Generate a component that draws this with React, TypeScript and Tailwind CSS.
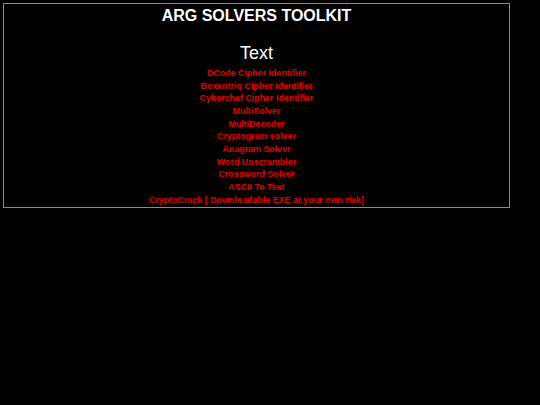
import React from 'react';

const links = [
  'DCode Cipher Identifier',
  'Boxentriq Cipher Identifier',
  'Cyberchef Cipher Identifier',
  'MultiSolver',
  'MultiDecoder',
  'Cryptogram solver',
  'Anagram Solver',
  'Word Unscrambler',
  'Crossword Solver',
  'ASCII To Text',
  'CryptoCrack [ Downloadable EXE at your own risk]',
];

const App: React.FC = () => {
  return (
    <div className="min-h-[405px] bg-black pt-[3px] pl-[3px] font-['Liberation_Sans',Arial,sans-serif]">
      <div className="w-[507px] h-[205px] border border-[#8a8a8a] flex flex-col items-center">
        <h1 className="text-[16px] leading-[23px] font-bold text-white">
          ARG SOLVERS TOOLKIT
        </h1>
        <h2 className="mt-[14px] text-[18px] leading-[24px] text-white">Text</h2>
        <ul className="mt-[2px] flex flex-col items-center">
          {links.map((l) => (
            <li key={l}>
              <a href="#" className="block text-[8.9px] leading-[12.66px] font-bold text-[#e00000]">
                {l}
              </a>
            </li>
          ))}
        </ul>
      </div>
    </div>
  );
};

export default App;
